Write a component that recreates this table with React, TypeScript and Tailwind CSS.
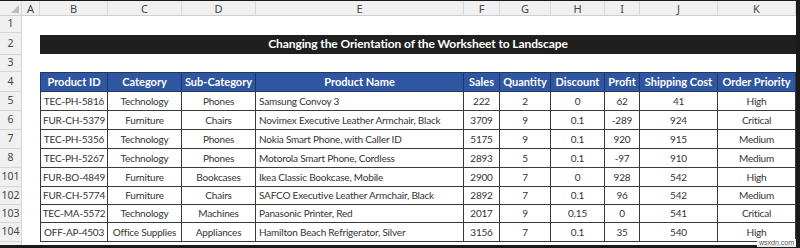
import React from "react";

const cols = ["A", "B", "C", "D", "E", "F", "G", "H", "I", "J", "K"];
const widths = [18, 68, 74, 74, 208, 36, 51, 54, 35, 78, 78];

const heads = ["Product ID", "Category", "Sub-Category", "Product Name", "Sales", "Quantity", "Discount", "Profit", "Shipping Cost", "Order Priority"];

const rows = [
  { n: "5", h: 19, d: ["TEC-PH-5816", "Technology", "Phones", "Samsung Convoy 3", "222", "2", "0", "62", "41", "High"] },
  { n: "6", h: 19, d: ["FUR-CH-5379", "Furniture", "Chairs", "Novimex Executive Leather Armchair, Black", "3709", "9", "0.1", "-289", "924", "Critical"] },
  { n: "7", h: 19, d: ["TEC-PH-5356", "Technology", "Phones", "Nokia Smart Phone, with Caller ID", "5175", "9", "0.1", "920", "915", "Medium"] },
  { n: "8", h: 19, d: ["TEC-PH-5267", "Technology", "Phones", "Motorola Smart Phone, Cordless", "2893", "5", "0.1", "-97", "910", "Medium"] },
  { n: "101", h: 19, d: ["FUR-BO-4849", "Furniture", "Bookcases", "Ikea Classic Bookcase, Mobile", "2900", "7", "0", "928", "542", "High"] },
  { n: "102", h: 18, d: ["FUR-CH-5774", "Furniture", "Chairs", "SAFCO Executive Leather Armchair, Black", "2892", "7", "0.1", "96", "542", "Medium"] },
  { n: "103", h: 18, d: ["TEC-MA-5572", "Technology", "Machines", "Panasonic Printer, Red", "2017", "9", "0.15", "0", "541", "Critical"] },
  { n: "104", h: 19, d: ["OFF-AP-4503", "Office Supplies", "Appliances", "Hamilton Beach Refrigerator, Silver", "3156", "7", "0.1", "35", "540", "High"] },
];

function RowNum({ n, h }: { n: string; h: number }) {
  return (
    <div
      className="w-[22px] shrink-0 bg-[#f0f0f0] border-b border-r border-[#d6d6d6] text-[#444] text-[10.5px] flex items-center justify-center font-['Noto_Sans',sans-serif]"
      style={{ height: h }}
    >
      {n}
    </div>
  );
}

export default function App() {
  return (
    <div className="relative w-[800px] h-[248px] bg-[#1a1a1a] pt-[1px] pr-[4px] pb-[3px] overflow-hidden font-['Lato',sans-serif]">
      <div className="bg-white h-full flex flex-col">
        {/* column letters */}
        <div className="flex h-[15px] bg-[#f0f0f0] border-b border-[#cfcfcf] text-[11px] text-[#444] font-['Noto_Sans',sans-serif] leading-none">
          <div className="w-[22px] shrink-0 border-r border-[#d6d6d6] relative">
            <div className="absolute right-[2px] bottom-[2px] w-0 h-0 border-l-[8px] border-l-transparent border-b-[8px] border-b-[#bdbdbd]" />
          </div>
          {cols.map((c, i) => (
            <div key={c} className="shrink-0 border-r border-[#d6d6d6] flex items-center justify-center" style={{ width: widths[i] }}>
              {c}
            </div>
          ))}
        </div>

        <div className="flex">
          <RowNum n="1" h={17} />
          <div className="flex-1" />
        </div>
        <div className="flex">
          <RowNum n="2" h={22} />
          <div className="w-[18px] shrink-0" />
          <div className="w-[756px] flex items-center">
            <div className="w-full h-[19px] bg-[#1f1f1f] text-white font-bold text-[12px] tracking-[-0.1px] flex items-center justify-center">
              Changing the Orientation of the Worksheet to Landscape
            </div>
          </div>
        </div>
        <div className="flex">
          <RowNum n="3" h={17} />
          <div className="flex-1" />
        </div>
        <div className="flex">
          <RowNum n="4" h={20} />
          <div className="w-[18px] shrink-0" />
          <div className="flex border border-[#1f3864] bg-[#2f56a0]">
            {heads.map((t, i) => (
              <div
                key={t}
                className="shrink-0 h-[18px] border-r border-[#1f3864] last:border-r-0 text-white font-bold text-[11px] flex items-center justify-center whitespace-nowrap"
                style={{ width: widths[i + 1] - (i === 0 ? 1 : 0) - (i === 9 ? 1 : 0) }}
              >
                {t}
              </div>
            ))}
          </div>
        </div>
        {rows.map((r) => (
          <div key={r.n} className="flex">
            <RowNum n={r.n} h={r.h} />
            <div className="w-[18px] shrink-0" />
            <div className="flex border-l border-r border-b border-[#3a3a3a]">
              {r.d.map((t, i) => (
                <div
                  key={i}
                  className={`shrink-0 border-r border-[#3a3a3a] last:border-r-0 text-[#333] text-[10px] tracking-[-0.2px] flex items-center whitespace-nowrap ${i === 3 ? "justify-start pl-[3px]" : "justify-center"}`}
                  style={{ width: widths[i + 1] - (i === 0 ? 1 : 0) - (i === 9 ? 1 : 0), height: r.h - 1 }}
                >
                  {t}
                </div>
              ))}
            </div>
          </div>
        ))}
        <div className="flex flex-1">
          <div className="w-[22px] shrink-0 bg-[#f0f0f0] border-r border-[#d6d6d6]" />
          <div className="flex-1" />
        </div>
      </div>
      <div className="absolute right-[4px] bottom-[1px] bg-white/90 px-[2px] text-[7px] leading-[8px] text-[#555] font-['Liberation_Sans',sans-serif]">
        wsxdn.com
      </div>
    </div>
  );
}
